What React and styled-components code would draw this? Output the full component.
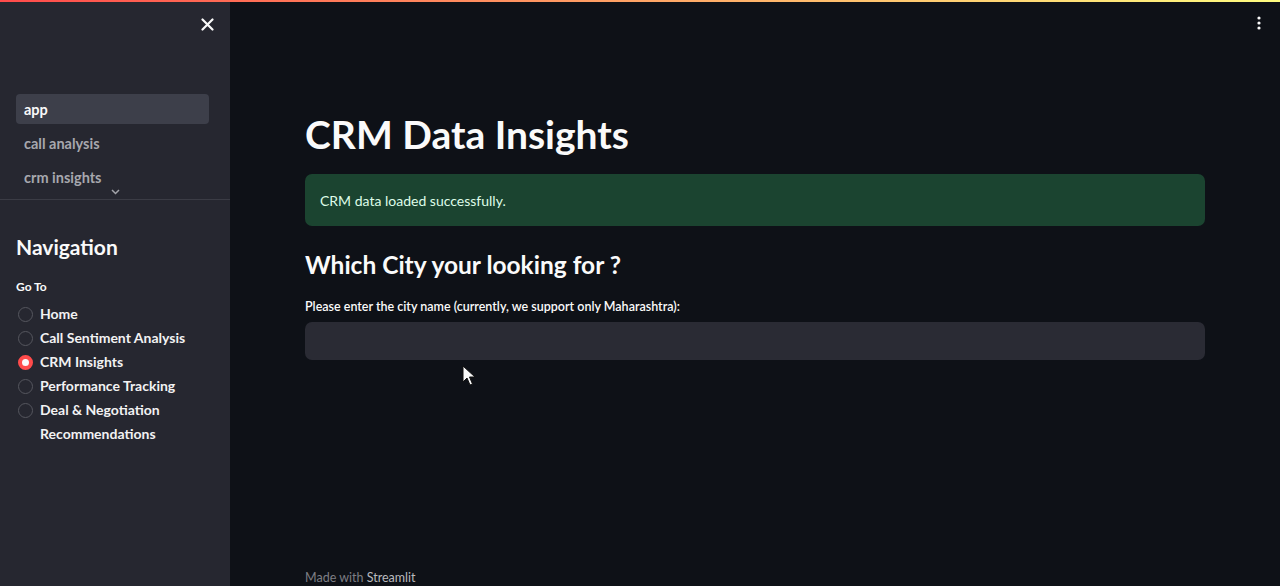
import React from "react";
import styled, { createGlobalStyle } from "styled-components";

const GlobalStyle = createGlobalStyle`
  html, body {
    margin: 0;
    padding: 0;
    height: 100%;
    overflow: hidden;
    background: #0e1117;
  }
  body {
    font-family: "Lato", "Noto Sans", sans-serif;
    color: #fafafa;
  }
`;

const pages = ["app", "call analysis", "crm insights"];
const options = [
  "Home",
  "Call Sentiment Analysis",
  "CRM Insights",
  "Performance Tracking",
  "Deal & Negotiation Recommendations",
];

function App() {
  return (
    <>
      <GlobalStyle />
      <Page>
        <Decoration />
        <Body>
          <Sidebar>
            <SidebarHeader>
              <CloseButton aria-label="close">
                <svg width="13" height="13" viewBox="0 0 13 13">
                  <path d="M1.5 1.5 L11.5 11.5 M11.5 1.5 L1.5 11.5" stroke="#fafafa" strokeWidth="2.2" strokeLinecap="round" />
                </svg>
              </CloseButton>
            </SidebarHeader>
            <PageNav>
              {pages.map((p, i) => (
                <NavLink key={p} $active={i === 0}>{p}</NavLink>
              ))}
              <Chevron>
                <svg width="9" height="6" viewBox="0 0 9 6">
                  <path d="M1 1 L4.5 4.5 L8 1" stroke="#a3a4aa" strokeWidth="1.5" fill="none" />
                </svg>
              </Chevron>
            </PageNav>
            <SidebarContent>
              <NavTitle>Navigation</NavTitle>
              <RadioLabel>Go To</RadioLabel>
              <RadioGroup>
                {options.map((o) => (
                  <RadioRow key={o}>
                    <RadioDot $checked={o === "CRM Insights"} />
                    <RadioText>{o}</RadioText>
                  </RadioRow>
                ))}
              </RadioGroup>
            </SidebarContent>
          </Sidebar>
          <Main>
            <MenuButton aria-label="menu">
              <svg width="4" height="14" viewBox="0 0 4 14">
                <circle cx="2" cy="2" r="1.6" fill="#fafafa" />
                <circle cx="2" cy="7" r="1.6" fill="#fafafa" />
                <circle cx="2" cy="12" r="1.6" fill="#fafafa" />
              </svg>
            </MenuButton>
            <Content>
              <Title>CRM Data Insights</Title>
              <Alert>CRM data loaded successfully.</Alert>
              <SubHeader>Which City your looking for ?</SubHeader>
              <InputLabel>Please enter the city name (currently, we support only Maharashtra):</InputLabel>
              <TextInput type="text" />
              <Spacer />
              <Footer>
                Made with <FooterLink>Streamlit</FooterLink>
              </Footer>
            </Content>
            <Cursor width="14" height="22" viewBox="0 0 14 22">
              <path d="M1 1 L1 17 L5 13 L8 20 L10.5 19 L7.5 12 L13 12 Z" fill="#fafafa" stroke="#111" strokeWidth="1" />
            </Cursor>
          </Main>
        </Body>
      </Page>
    </>
  );
}

const Page = styled.div`
  display: flex;
  flex-direction: column;
  height: 100vh;
`;

const Decoration = styled.div`
  height: 2px;
  flex-shrink: 0;
  background: linear-gradient(90deg, #ff4b4b, #fffd80);
`;

const Body = styled.div`
  flex: 1;
  display: flex;
  min-height: 0;
`;

const Sidebar = styled.aside`
  width: 230px;
  flex-shrink: 0;
  background: #262730;
  display: flex;
  flex-direction: column;
`;

const SidebarHeader = styled.div`
  display: flex;
  justify-content: flex-end;
  padding: 13px 11px 0 0;
  height: 78px;
  box-sizing: border-box;
`;

const CloseButton = styled.button`
  width: 24px;
  height: 18px;
  border: 0;
  padding: 0;
  background: transparent;
  display: flex;
  align-items: center;
  justify-content: center;
  cursor: pointer;
`;

const PageNav = styled.nav`
  display: flex;
  flex-direction: column;
  gap: 4px;
  padding: 14px 21px 0 16px;
  border-bottom: 1px solid #3b3c45;
`;

const NavLink = styled.div`
  height: 30px;
  display: flex;
  align-items: center;
  padding: 0 8px;
  border-radius: 4px;
  font-size: 14.5px;
  font-weight: 700;
  color: ${(p) => (p.$active ? "#fafafa" : "#a7a8ae")};
  background: ${(p) => (p.$active ? "#3d3f4a" : "transparent")};
`;

const Chevron = styled.div`
  display: flex;
  justify-content: center;
  height: 10px;
  margin-top: -7px;
  padding-bottom: 0;
  padding-left: 6px;
`;

const SidebarContent = styled.div`
  padding: 33px 16px 0 16px;
  display: flex;
  flex-direction: column;
`;

const NavTitle = styled.h2`
  margin: 0;
  font-size: 21px;
  font-weight: 700;
  line-height: 28px;
  color: #fafafa;
`;

const RadioLabel = styled.div`
  margin-top: 18px;
  font-size: 12px;
  font-weight: 700;
  line-height: 16px;
  color: #fafafa;
`;

const RadioGroup = styled.div`
  margin-top: 7px;
  display: flex;
  flex-direction: column;
`;

const RadioRow = styled.label`
  display: flex;
  align-items: flex-start;
  gap: 7px;
  font-size: 14px;
  line-height: 24px;
`;

const RadioDot = styled.span`
  width: 15px;
  height: 15px;
  box-sizing: border-box;
  border-radius: 50%;
  margin-top: 5px;
  margin-left: 2px;
  flex-shrink: 0;
  border: ${(p) => (p.$checked ? "4.5px solid #ff4b4b" : "1.5px solid #55565e")};
  background: ${(p) => (p.$checked ? "#fafafa" : "transparent")};
`;

const RadioText = styled.span`
  font-weight: 700;
  color: #f2f2f3;
  width: 150px;
`;

const Main = styled.main`
  flex: 1;
  position: relative;
  display: flex;
  justify-content: center;
  background: #0e1117;
`;

const MenuButton = styled.button`
  position: absolute;
  top: 14px;
  right: 19px;
  border: 0;
  padding: 0;
  background: transparent;
  cursor: pointer;
`;

const Content = styled.div`
  width: 900px;
  display: flex;
  flex-direction: column;
  padding-top: 108px;
`;

const Title = styled.h1`
  margin: 0;
  font-size: 39px;
  font-weight: 700;
  line-height: 48px;
  color: #fafafa;
`;

const Alert = styled.div`
  margin-top: 16px;
  height: 52px;
  display: flex;
  align-items: center;
  padding: 0 15px;
  border-radius: 7px;
  background: #1b4430;
  color: #dffde9;
  font-size: 14px;
`;

const SubHeader = styled.h3`
  margin: 21px 0 0;
  font-size: 24.5px;
  font-weight: 700;
  line-height: 36px;
  color: #fafafa;
`;

const InputLabel = styled.label`
  margin-top: 16px;
  font-size: 12.5px;
  font-weight: 600;
  line-height: 16px;
  color: #fafafa;
`;

const TextInput = styled.input`
  margin-top: 7px;
  height: 38px;
  border: 0;
  border-radius: 7px;
  background: #2a2b34;
  color: #fafafa;
  outline: none;
  padding: 0 12px;
`;

const Spacer = styled.div`
  flex: 1;
`;

const Footer = styled.footer`
  font-size: 12.5px;
  color: #7d7e84;
  line-height: 14px;
  margin-bottom: 1px;
`;

const FooterLink = styled.span`
  color: #b9babe;
`;

const Cursor = styled.svg`
  position: absolute;
  left: 232px;
  top: 363px;
  pointer-events: none;
`;

export default App;
